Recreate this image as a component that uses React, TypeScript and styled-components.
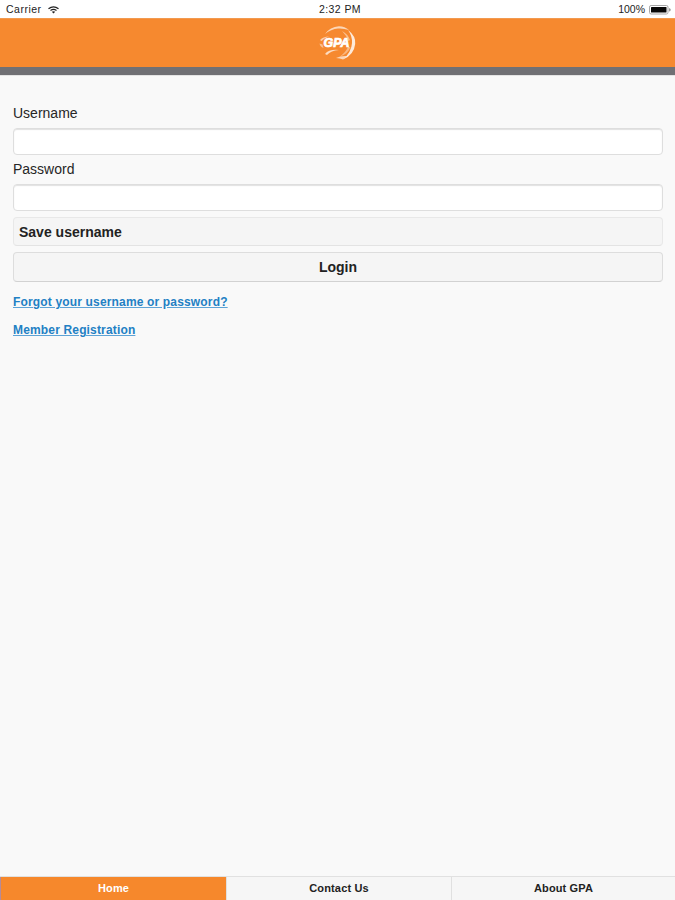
import React from "react";
import styled, { createGlobalStyle } from "styled-components";

const GlobalStyle = createGlobalStyle`
  * { box-sizing: border-box; }
  body {
    margin: 0;
    background: #f9f9f9;
    color: #262626;
    font-family: "Liberation Sans", Arial, sans-serif;
  }
`;

const Screen = styled.div`
  display: flex;
  flex-direction: column;
  width: 100%;
  height: 100vh;
  overflow: hidden;
`;

const StatusBar = styled.div`
  display: grid;
  grid-template-columns: 1fr auto 1fr;
  align-items: center;
  height: 18px;
  padding: 1px 4px 0 6px;
  background: #fff;
  color: #222;
  font-size: 10.5px;
  line-height: 17px;
`;

const StatusGroup = styled.div<{ $end?: boolean }>`
  display: flex;
  align-items: center;
  justify-content: ${(p) => (p.$end ? "flex-end" : "flex-start")};
  gap: ${(p) => (p.$end ? 4 : 6)}px;
  letter-spacing: ${(p) => (p.$end ? 0 : 0.5)}px;
`;

const Clock = styled.span`
  letter-spacing: 0.42px;
  padding-left: 3px;
`;

const Header = styled.header`
  display: flex;
  align-items: center;
  justify-content: center;
  height: 57px;
  flex: none;
  background: #f6892f;
  border-bottom: 8px solid #707074;
  box-shadow: inset 0 1px #f29a50, 0 1px #e4e4e4;
`;

const Form = styled.form`
  flex: 1;
  display: flex;
  flex-direction: column;
  padding: 29px 12px 0 13px;
`;

const Label = styled.label`
  height: 24px;
  font-size: 14px;
  line-height: 18px;
`;

const Input = styled.input`
  width: 100%;
  height: 27px;
  margin-bottom: 5px;
  padding: 0 6px;
  border: 1px solid #dedede;
  border-radius: 4px;
  background: #fff;
  box-shadow: inset 0 1px 1px #e2e2e2;
  outline: none;
  font: inherit;
`;

const Button = styled.button<{ $left?: boolean }>`
  width: 100%;
  height: ${(p) => (p.$left ? 29 : 30)}px;
  margin-top: ${(p) => (p.$left ? 1 : 0)}px;
  margin-bottom: 6px;
  padding: ${(p) => (p.$left ? "1px 5px 0" : "0 5px")};
  border: 1px solid ${(p) => (p.$left ? "#e8e8e8" : "#dddddd")};
  border-bottom-color: ${(p) => (p.$left ? "#e3e3e3" : "#d2d2d2")};
  border-radius: 4px;
  background: #f5f5f5;
  color: #222;
  font: bold 14px/27px "Liberation Sans", Arial, sans-serif;
  text-align: ${(p) => (p.$left ? "left" : "center")};
`;

const Links = styled.div`
  display: flex;
  flex-direction: column;
  align-items: flex-start;
  gap: 12px;
  padding-top: 6px;
`;

const TextLink = styled.a`
  color: #2280c4;
  font-size: 12px;
  font-weight: bold;
  line-height: 16px;
  letter-spacing: 0.16px;
  text-decoration: underline;
  text-decoration-color: #5da3d6;
`;

const TabBar = styled.nav`
  display: grid;
  grid-template-columns: 226px 225px 1fr;
  flex: none;
  height: 24px;
  border-top: 1px solid #e1e1e1;
  border-bottom: 1px solid #e8e8e8;
`;

const Tab = styled.a<{ $active?: boolean }>`
  border-left: 1px solid ${(p) => (p.$active ? "#b58a9a" : "#e0e0e0")};
  background: ${(p) => (p.$active ? "#f6882c" : "#f6f6f6")};
  color: ${(p) => (p.$active ? "#fff" : "#222")};
  font-size: 11px;
  font-weight: bold;
  letter-spacing: 0.14px;
  line-height: 23px;
  text-align: center;
`;

const WifiIcon = () => (
  <svg width="11" height="8" viewBox="0 0 11 8" fill="none" stroke="#222">
    <path d="M.5 2.7Q5.5-1 10.5 2.7" strokeWidth="1.4" />
    <path d="M2.5 4.5Q5.5 2.3 8.5 4.5" strokeWidth="1.1" />
    <path d="M3.8 5.8Q5.5 4.7 7.2 5.8L5.5 7.6Z" fill="#222" stroke="none" />
  </svg>
);

const BatteryIcon = () => (
  <svg width="22" height="10" viewBox="0 0 22 10">
    <rect x=".5" y=".5" width="18.5" height="8.5" rx="1.6" fill="#fff" stroke="#a6a6a6" />
    <rect x="2" y="2" width="15.5" height="5.5" rx=".6" fill="#080808" />
    <path d="M20 3Q21.8 3.4 21.8 4.8T20 6.6Z" fill="#999" />
  </svg>
);

const Logo = () => (
  <svg width="38" height="38" viewBox="0 0 38 38" role="img" aria-label="GPA">
    <g fill="#fff">
      <path d="M6 10Q11 3 20 2.3Q26 2.5 30 6Q24 4 19 4.5Q12 5 6 10Z" opacity=".65" />
      <path d="M29 6Q37 12 36.2 20Q35 31 24 35.5Q32.5 28 33 19Q33.4 12 29 6Z" opacity=".82" />
      <path d="M23 7Q29 10 31 16L29.5 17Q27 11 23 7Z" opacity=".45" />
      <path d="M31.5 23Q29 30 21 32.5Q27 28 29 23Z" opacity=".4" />
      <path d="M6 30Q10 25 20 26Q12 26.5 8 31Z" opacity=".7" />
      <path d="M17 34Q22 31.5 28 32L24 35.5Q21 34 17 34Z" opacity=".65" />
      <path d="M1 16Q4 12.5 10 12.5Q5 14 2.5 17Z" opacity=".6" />
      <path d="M.5 19.5L3.5 20.5L4.5 24Q1 22.5 .5 19.5Z" opacity=".45" />
    </g>
    <text x="4.5" y="23" fill="#fff" stroke="#fff" strokeWidth=".7" fontFamily="Liberation Sans, Arial, sans-serif" fontSize="12" fontWeight="bold" fontStyle="italic" textLength="26" lengthAdjust="spacingAndGlyphs">GPA</text>
  </svg>
);

export default function App() {
  return (
    <>
      <GlobalStyle />
      <Screen>
        <StatusBar>
          <StatusGroup>
            <span>Carrier</span>
            <WifiIcon />
          </StatusGroup>
          <Clock>2:32 PM</Clock>
          <StatusGroup $end>
            <span>100%</span>
            <BatteryIcon />
          </StatusGroup>
        </StatusBar>
        <Header>
          <Logo />
        </Header>
        <Form>
          <Label htmlFor="username">Username</Label>
          <Input id="username" />
          <Label htmlFor="password">Password</Label>
          <Input id="password" type="password" />
          <Button type="button" $left>Save username</Button>
          <Button type="button">Login</Button>
          <Links>
            <TextLink href="#">Forgot your username or password?</TextLink>
            <TextLink href="#">Member Registration</TextLink>
          </Links>
        </Form>
        <TabBar>
          <Tab $active>Home</Tab>
          <Tab>Contact Us</Tab>
          <Tab>About GPA</Tab>
        </TabBar>
      </Screen>
    </>
  );
}
